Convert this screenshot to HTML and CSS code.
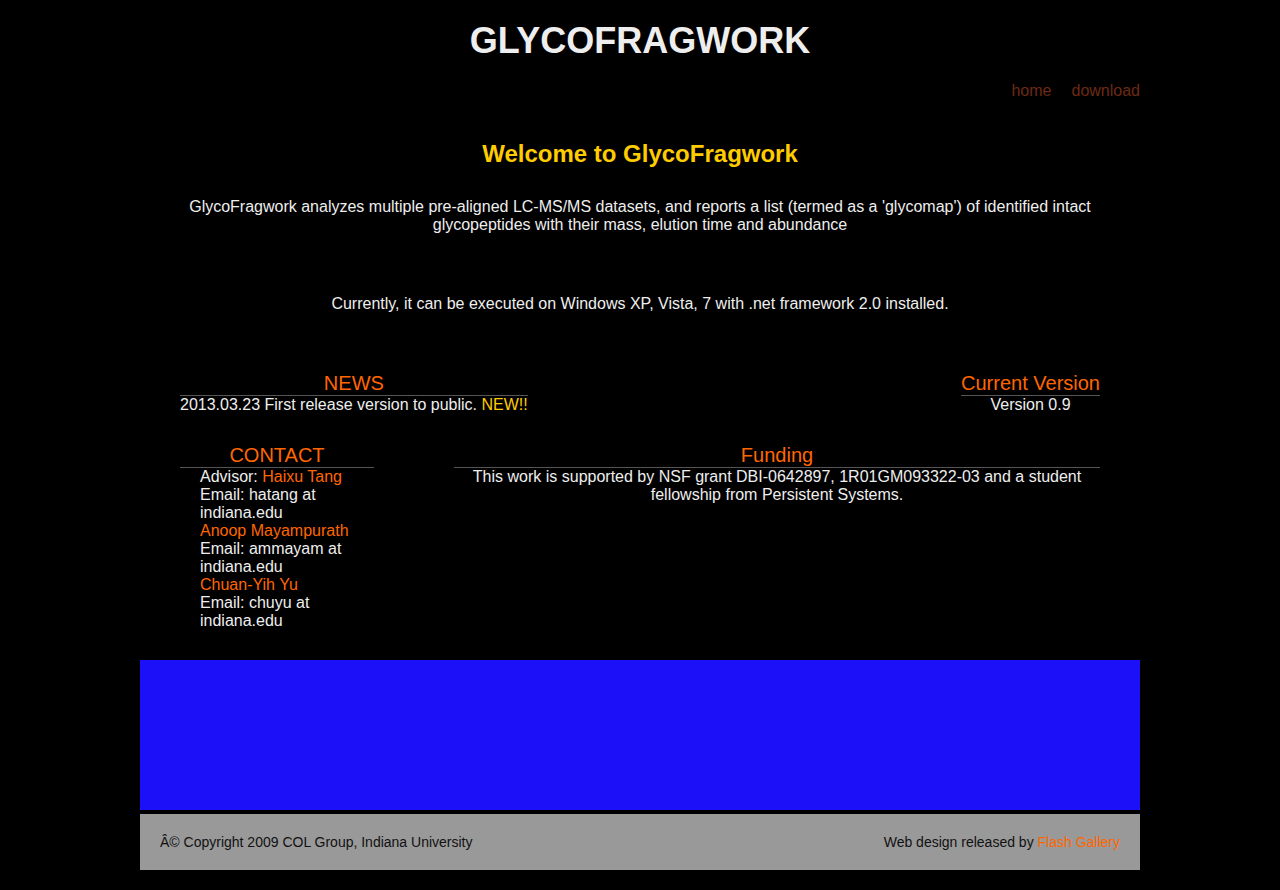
FILE: index.html
```html
<!DOCTYPE html>
<html>
<head>
<meta charset="utf-8">
<title>GlycoFragwork</title>
<link rel="stylesheet" href="styles.css">
</head>
<body>
<div class="wrap">
  <header class="header">
    <h1 class="title">GLYCOFRAGWORK</h1>
    <nav class="nav"><a href="#">home</a><a href="#">download</a></nav>
  </header>
  <main class="content">
    <h2 class="welcome">Welcome to GlycoFragwork</h2>
    <p class="intro">GlycoFragwork analyzes multiple pre-aligned LC-MS/MS datasets, and reports a list (termed as a 'glycomap') of identified intact glycopeptides with their mass, elution time and abundance</p>
    <p class="intro current">Currently, it can be executed on Windows XP, Vista, 7 with .net framework 2.0 installed.</p>
    <div class="row row-news">
      <section class="box">
        <h3 class="box-title">NEWS</h3>
        <div class="box-body">2013.03.23 First release version to public. <span class="new">NEW!!</span></div>
      </section>
      <section class="box">
        <h3 class="box-title">Current Version</h3>
        <div class="box-body">Version 0.9</div>
      </section>
    </div>
    <div class="row row-contact">
      <section class="box contact">
        <h3 class="box-title">CONTACT</h3>
        <ul class="contact-list">
          <li>Advisor: <a href="#">Haixu Tang</a></li>
          <li>Email: hatang at indiana.edu</li>
          <li><a href="#">Anoop Mayampurath</a></li>
          <li>Email: ammayam at indiana.edu</li>
          <li><a href="#">Chuan-Yih Yu</a></li>
          <li>Email: chuyu at indiana.edu</li>
        </ul>
      </section>
      <section class="box funding">
        <h3 class="box-title">Funding</h3>
        <div class="box-body">This work is supported by NSF grant DBI-0642897, 1R01GM093322-03 and a student fellowship from Persistent Systems.</div>
      </section>
    </div>
  </main>
  <div class="banner"></div>
  <footer class="footer">
    <span>Â© Copyright 2009 COL Group, Indiana University</span>
    <span>Web design released by <a href="#">Flash Gallery</a></span>
  </footer>
</div>
</body>
</html>
```
FILE: styles.css
```css
html, body {
  margin: 0;
  padding: 0;
  background: #000;
}
body {
  font-family: "Liberation Sans", Arial, sans-serif;
  color: #eeeeee;
  font-size: 16px;
}
a {
  color: #ff6600;
  text-decoration: none;
}
.wrap {
  width: 1000px;
  margin: 0 auto;
  padding-bottom: 20px;
}
.header {
  padding-top: 20px;
}
.title {
  margin: 0;
  text-align: center;
  font-size: 36px;
  line-height: 41px;
  font-weight: bold;
  color: #eeeeee;
}
.nav {
  display: flex;
  justify-content: flex-end;
  gap: 20px;
  margin-top: 21px;
  line-height: 18px;
}
.nav a {
  color: #6e2a14;
}
.content {
  padding: 0 40px;
}
.welcome {
  margin: 40px 0 0;
  text-align: center;
  font-size: 24px;
  line-height: 28px;
  color: #ffcc00;
}
.intro {
  margin: 30px 0 0;
  text-align: center;
  line-height: 18px;
}
.intro.current {
  margin-top: 61px;
}
.row {
  display: flex;
  align-items: flex-start;
}
.row-news {
  justify-content: space-between;
  margin-top: 59px;
}
.row-contact {
  margin-top: 30px;
}
.box-title {
  margin: 0;
  font-size: 20px;
  line-height: 23px;
  font-weight: normal;
  color: #ff6600;
  text-align: center;
  border-bottom: 1px solid #555;
}
.box-body {
  text-align: center;
  line-height: 18px;
}
.contact {
  width: 194px;
}
.contact-list {
  list-style: none;
  margin: 0;
  padding: 0 0 0 20px;
  line-height: 18px;
}
.funding {
  margin-left: 80px;
  flex: 1;
}
.new {
  color: #ffcc00;
}
.banner {
  margin-top: 30px;
  height: 150px;
  background: #1c10f8;
}
.footer {
  margin-top: 4px;
  height: 56px;
  background: #999999;
  color: #111;
  font-size: 14px;
  display: flex;
  align-items: center;
  justify-content: space-between;
  padding: 0 20px;
}
```
